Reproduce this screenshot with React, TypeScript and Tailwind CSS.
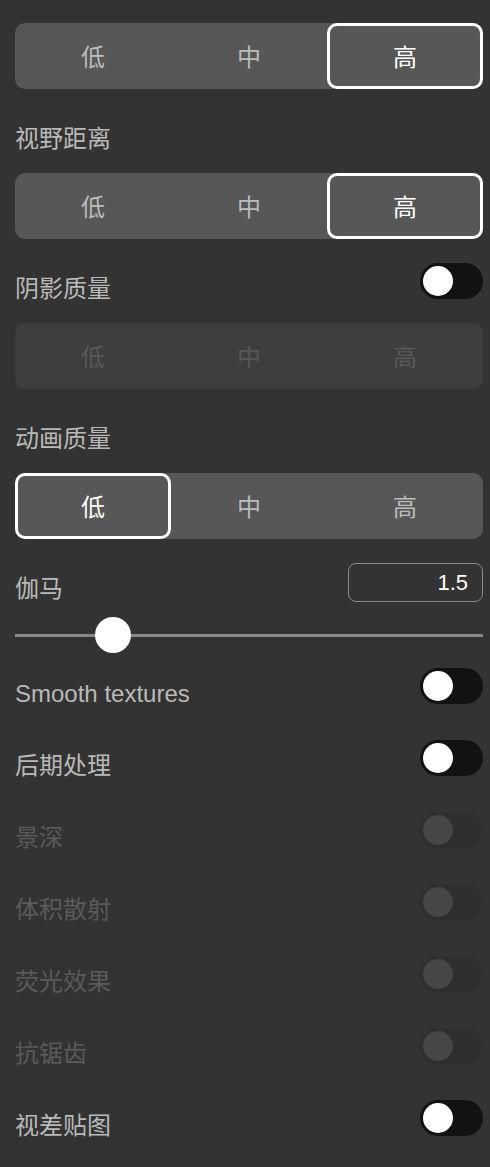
import { useState } from 'react';

type Level = 0 | 1 | 2;
const LEVELS = ['低', '中', '高'];

function Segmented({ value, disabled }: { value: Level; disabled?: boolean }) {
  return (
    <div className={`grid grid-cols-3 h-[66px] rounded-[10px] ${disabled ? 'bg-[#3e3e3e]' : 'bg-[#575757]'}`}>
      {LEVELS.map((l, i) => {
        const active = !disabled && i === value;
        return (
          <div
            key={l}
            className={`flex items-center justify-center pt-[3px] text-[24px] rounded-[10px] ${
              active ? 'border-[3px] border-white text-white' : disabled ? 'text-[#585858]' : 'text-[#bcbcbc]'
            }`}
          >
            {l}
          </div>
        );
      })}
    </div>
  );
}

function Toggle({ disabled }: { disabled?: boolean }) {
  return (
    <div className={`w-[63px] h-[36px] rounded-full p-[3px] flex items-center shrink-0 ${disabled ? 'bg-[#2f2f2f]' : 'bg-[#121212]'}`}>
      <div className={`w-[30px] h-[30px] rounded-full ${disabled ? 'bg-[#464646]' : 'bg-white'}`} />
    </div>
  );
}

function Row({ label, toggle, disabled, right }: { label: string; toggle?: boolean; disabled?: boolean; right?: React.ReactNode }) {
  return (
    <div className="flex justify-between items-start h-[36px]">
      <span className={`text-[24px] leading-[24px] mt-[14px] ${disabled ? 'text-[#5a5a5a]' : 'text-[#b9b9b9]'}`}>{label}</span>
      {toggle && <Toggle disabled={disabled} />}
      {right}
    </div>
  );
}

export default function App() {
  const [gamma] = useState('1.5');
  return (
    <div
      className="min-h-[1167px] bg-[#333333] pl-[15px] pr-[7px] pt-[23px] pb-6"
      style={{ fontFamily: '"Liberation Sans", "Noto Sans CJK SC", sans-serif' }}
    >
      <div className="flex flex-col gap-6">
        <Segmented value={2} />
        <Row label="视野距离" />
        <Segmented value={2} />
        <Row label="阴影质量" toggle />
        <Segmented value={2} disabled />
        <Row label="动画质量" />
        <Segmented value={0} />
        <Row
          label="伽马"
          right={
            <div className="w-[135px] h-[39px] shrink-0 rounded-[8px] border border-[#8a8a8a] flex items-center justify-end pr-[14px] text-white text-[22px]">
              {gamma}
            </div>
          }
        />
      </div>

      <div className="flex items-center h-[36px] mt-[18px]">
        <div className="w-[80px] h-[3px] bg-[#888888]" />
        <div className="w-[36px] h-[36px] rounded-full bg-white shrink-0" />
        <div className="flex-1 h-[3px] bg-[#888888]" />
      </div>

      <div className="flex flex-col gap-9 mt-[15px]">
        <Row label="Smooth textures" toggle />
        <Row label="后期处理" toggle />
        <Row label="景深" toggle disabled />
        <Row label="体积散射" toggle disabled />
        <Row label="荧光效果" toggle disabled />
        <Row label="抗锯齿" toggle disabled />
        <Row label="视差贴图" toggle />
      </div>
    </div>
  );
}
